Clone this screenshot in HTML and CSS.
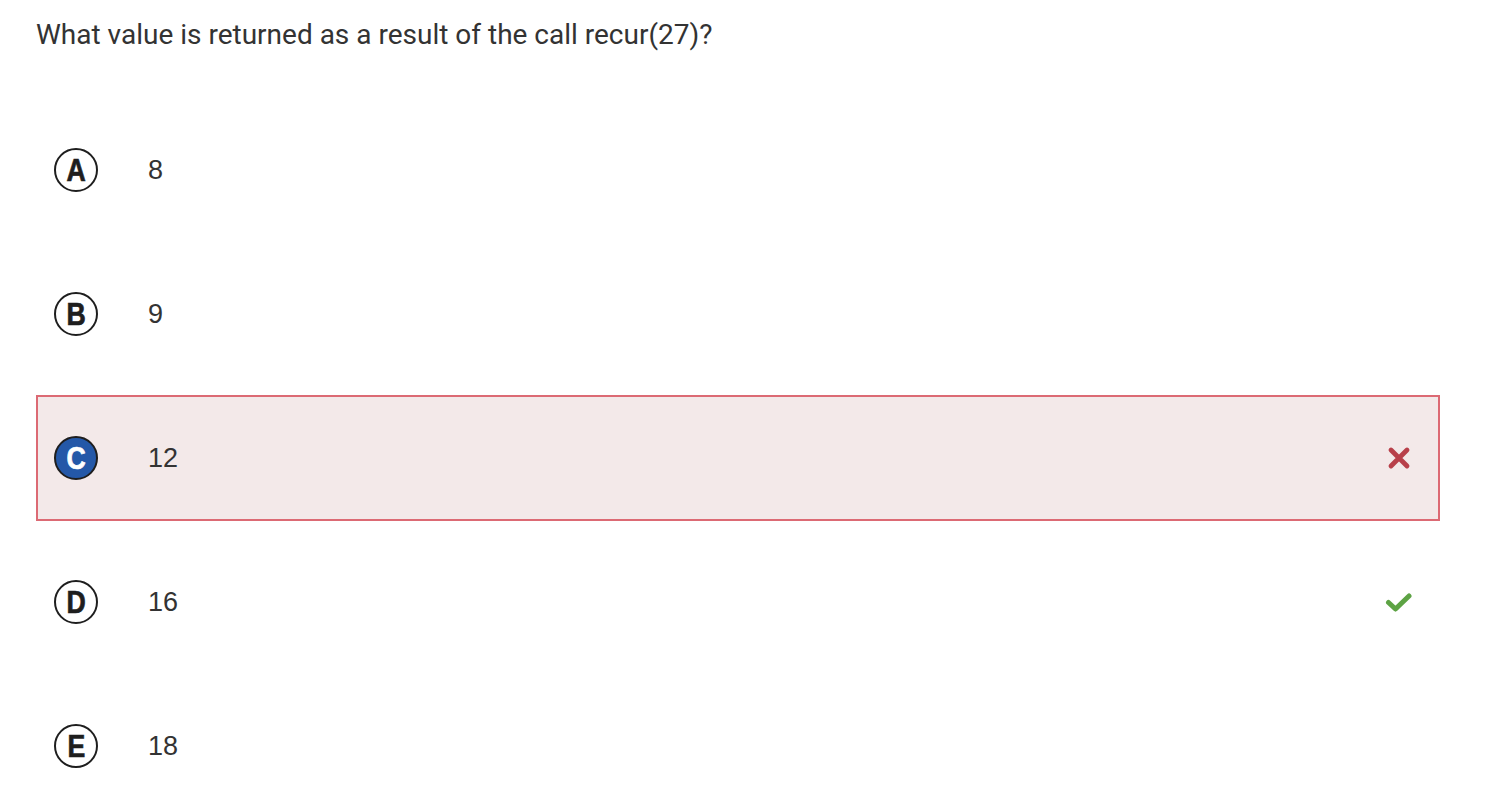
FILE: index.html
```html
<!DOCTYPE html>
<html>
<head>
<meta charset="utf-8">
<link rel="stylesheet" href="styles.css">
</head>
<body>
<div class="page">
  <h1 class="question">What value is returned as a result of the call recur(27)?</h1>
  <div class="options">
    <div class="option">
      <span class="letter"><span class="glyph">A</span></span><span class="value">8</span>
    </div>
    <div class="option">
      <span class="letter"><span class="glyph">B</span></span><span class="value">9</span>
    </div>
    <div class="option wrong">
      <span class="letter selected"><span class="glyph">C</span></span><span class="value">12</span>
      <svg class="mark" width="28" height="28" viewBox="0 0 28 28"><path d="M6 6 L22 22 M22 6 L6 22" stroke="#b8404a" stroke-width="4.8" stroke-linecap="round" fill="none"/></svg>
    </div>
    <div class="option">
      <span class="letter"><span class="glyph">D</span></span><span class="value">16</span>
      <svg class="mark" width="28" height="28" viewBox="0 0 28 28"><path d="M3.5 14.5 L10.5 21 L24 8" stroke="#5da344" stroke-width="5" stroke-linecap="round" stroke-linejoin="round" fill="none"/></svg>
    </div>
    <div class="option">
      <span class="letter"><span class="glyph">E</span></span><span class="value">18</span>
    </div>
  </div>
</div>
</body>
</html>
```
FILE: styles.css
```css
html, body {
  margin: 0;
  padding: 0;
  background: #ffffff;
}
.page {
  padding: 14px 50px 0 36px;
  font-family: Roboto, "Liberation Sans", sans-serif;
  color: #333333;
}
.question {
  margin: 0;
  font-size: 28px;
  font-weight: 400;
  line-height: 42px;
  color: #333333;
}
.options {
  margin-top: 51px;
  display: flex;
  flex-direction: column;
  gap: 18px;
}
.option {
  height: 126px;
  box-sizing: border-box;
  border: 2px solid transparent;
  display: flex;
  align-items: center;
  padding: 0 25px 0 16px;
}
.option.wrong {
  background: #f3e9e9;
  border-color: #dc6a74;
}
.letter {
  width: 44px;
  height: 44px;
  box-sizing: border-box;
  border: 2px solid #1e1e1e;
  border-radius: 50%;
  display: flex;
  align-items: center;
  justify-content: center;
  color: #1e1e1e;
  flex: none;
}
.glyph {
  font-family: "Liberation Sans", Arial, sans-serif;
  font-weight: 700;
  font-size: 31px;
  line-height: 1;
  transform: scaleX(0.86);
  -webkit-text-stroke: 0.7px currentColor;
  margin-top: 1px;
}
.letter.selected {
  background: #2458a8;
  color: #ffffff;
}
.value {
  margin-left: 50px;
  font-family: "Liberation Sans", Arial, sans-serif;
  font-size: 27px;
  color: #333333;
  flex: 1;
}
.mark {
  flex: none;
}
```
